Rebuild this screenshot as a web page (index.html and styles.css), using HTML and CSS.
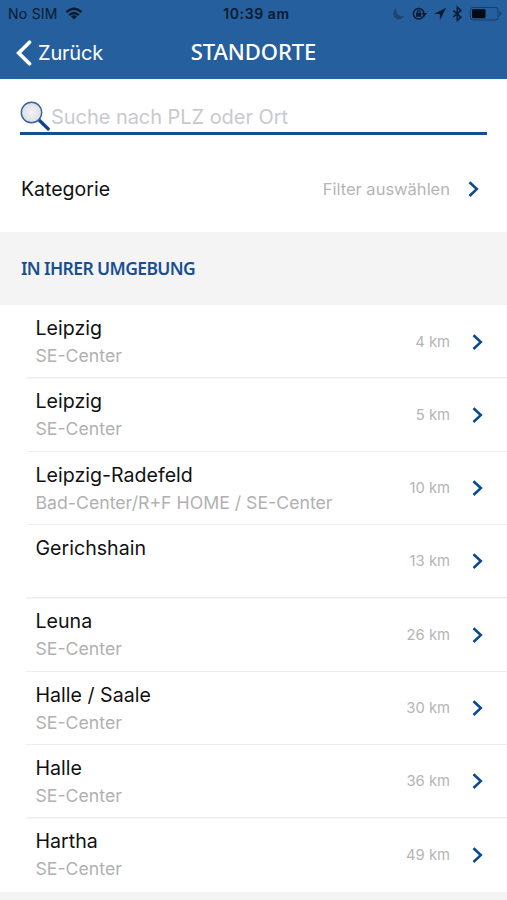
FILE: index.html
```html
<!DOCTYPE html>
<html lang="de">
<head>
<meta charset="utf-8">
<title>Standorte</title>
<link rel="stylesheet" href="styles.css">
</head>
<body>
<svg class="defs" aria-hidden="true"><defs>
<symbol id="chevron" viewBox="0 0 12 18"><path d="M1.500 2.200l7.300 6.900L1.500 16" fill="none" stroke="#0b4a92" stroke-width="2.600"/></symbol>
</defs></svg>
<header class="header">
  <div class="status">
    <div class="carrier"><span>No SIM</span>
      <svg width="18" height="14" viewBox="0 0 18 14"><g fill="none" stroke="#081a30" stroke-width="2.3"><path d="M1.500 5.200Q9-1.700 16.500 5.200M4.200 8.200Q9 3.700 13.800 8.200"/></g><path d="M6 9.500Q9 7.200 12 9.500L9 12.500z" fill="#081a30"/></svg>
    </div>
    <span class="time">10:39 am</span>
    <svg class="indicators" width="115" height="18" viewBox="0 0 115 18">
      <path d="M4 3C-.5 7 1 14 6.500 14.200c2.600.1 4.700-1.200 5.500-3.400C7.500 12.300 3.400 8.500 4 3z" fill="#1b4776"/>
      <circle cx="26.700" cy="8.800" r="5.300" fill="none" stroke="#081a30" stroke-width="1.500"/>
      <path d="M29.500 8h5.500l-2.700 3.500z" fill="#081a30"/>
      <rect x="24.200" y="8" width="5" height="3.800" fill="#081a30"/>
      <path d="M25.200 8.500V7.200a1.500 1.500 0 0 1 3 0V8.500" fill="none" stroke="#081a30" stroke-width="1.200"/>
      <path d="M54.200 2.800L42 9.100H47.900V15z" fill="#081a30"/>
      <path d="M61.300 5.600l7.600 6.600-3.600 3.200V2.200l3.600 3.200-7.600 6.600" fill="none" stroke="#081a30" stroke-width="1.500"/>
      <rect x="78.500" y="2.500" width="27.500" height="12.500" rx="2.500" fill="none" stroke="#183f6c"/>
      <rect x="80" y="4.200" width="13.500" height="9" rx="1" fill="#030a14"/>
      <path d="M107.500 6.500q2 .5 2 2.300t-2 2.300z" fill="#183f6c"/>
    </svg>
  </div>
  <div class="nav">
    <a class="back"><svg width="16" height="26" viewBox="0 0 16 26"><path d="M13.500 2.200L2.700 13l10.800 10.800" fill="none" stroke="#fff" stroke-width="3.700" stroke-linecap="round"/></svg><span>Zurück</span></a>
    <h1 class="title">STANDORTE</h1>
  </div>
</header>
<main>
  <div class="search">
    <svg width="31" height="31" viewBox="0 0 31 31"><defs><radialGradient id="lens"><stop offset="0" stop-color="#f5f4f7"/><stop offset="1" stop-color="#dcdce4"/></radialGradient></defs><path d="M18.500 18.500L28.300 28" stroke="#0d4688" stroke-width="3.200" stroke-linecap="round"/><circle cx="11.500" cy="11.500" r="10.200" fill="url(#lens)" stroke="#3b639b" stroke-width="1.400"/></svg>
    <span class="placeholder">Suche nach PLZ oder Ort</span>
  </div>
  <div class="category"><span class="label">Kategorie</span><span class="filter">Filter auswählen</span><svg class="chevron"><use href="#chevron"/></svg></div>
  <h2 class="section"><span>IN IHRER UMGEBUNG</span></h2>
  <ul class="list">
    <li class="row"><div class="place"><b>Leipzig</b><small>SE-Center</small></div><span class="km">4 km</span><svg class="chevron"><use href="#chevron"/></svg></li>
    <li class="row"><div class="place"><b>Leipzig</b><small>SE-Center</small></div><span class="km">5 km</span><svg class="chevron"><use href="#chevron"/></svg></li>
    <li class="row"><div class="place"><b>Leipzig-Radefeld</b><small>Bad-Center/R+F HOME / SE-Center</small></div><span class="km">10 km</span><svg class="chevron"><use href="#chevron"/></svg></li>
    <li class="row"><div class="place"><b>Gerichshain</b><small></small></div><span class="km">13 km</span><svg class="chevron"><use href="#chevron"/></svg></li>
    <li class="row"><div class="place"><b>Leuna</b><small>SE-Center</small></div><span class="km">26 km</span><svg class="chevron"><use href="#chevron"/></svg></li>
    <li class="row"><div class="place"><b>Halle / Saale</b><small>SE-Center</small></div><span class="km">30 km</span><svg class="chevron"><use href="#chevron"/></svg></li>
    <li class="row"><div class="place"><b>Halle</b><small>SE-Center</small></div><span class="km">36 km</span><svg class="chevron"><use href="#chevron"/></svg></li>
    <li class="row"><div class="place"><b>Hartha</b><small>SE-Center</small></div><span class="km">49 km</span><svg class="chevron"><use href="#chevron"/></svg></li>
  </ul>
</main>
</body>
</html>
```
FILE: styles.css
```css
* { box-sizing: border-box; }
body { margin: 0; height: 900px; overflow: hidden; background: #f4f4f4; font-family: Inter, "Liberation Sans", sans-serif; color: #111; }
svg { flex: none; display: block; }
.defs { position: absolute; width: 0; height: 0; }
.header { height: 79px; background: #255f9d; }
.status { height: 26px; display: grid; grid-template-columns: 1fr auto 1fr; align-items: center; color: #081a30; font-size: 14px; padding: 1px 0 0 8px; }
.carrier { display: flex; align-items: center; gap: 7px; letter-spacing: 0.25px; }
.time { font-weight: 600; letter-spacing: 0.6px; margin-right: 2px; }
.indicators { justify-self: end; }
.nav { height: 53px; display: grid; grid-template-columns: 1fr auto 1fr; align-items: center; padding: 0 16px; color: #fff; }
.back { display: flex; align-items: center; gap: 6px; font-size: 20px; letter-spacing: -0.2px; }
.title { margin: 0 0 3px; font: 500 22px/28px "Noto Sans", sans-serif; letter-spacing: -0.1px; }
main { background: #fff; }
.search { height: 56px; margin: 0 20px; border-bottom: 3px solid #14508f; display: flex; align-items: flex-end; }
.placeholder { font-size: 20px; line-height: 28px; padding-bottom: 1.5px; letter-spacing: -0.05px; color: #c9c9ce; }
.category { height: 97px; padding: 10px 27px 0 21px; display: flex; align-items: center; }
.label { font-size: 19.5px; flex: 1; }
.filter { font-size: 16.5px; color: #b5b5b5; margin-right: 18px; }
.chevron { width: 12px; height: 18px; }
.section { margin: 0; height: 73px; background: #f4f4f4; padding: 0 21px 2px; display: flex; align-items: center; font: 600 17.5px/24px "Noto Sans", sans-serif; letter-spacing: -0.6px; color: #174f92; }
.list { margin: 0; padding: 0.6px 0 0; list-style: none; background: #fff; }
.row { height: 73.3px; margin-left: 26px; padding: 0 23px 1.4px 9.5px; background: linear-gradient(#efefef, #efefef) 0 100% / 100% 1.5px no-repeat; display: flex; align-items: center; }
.row:last-child { background: none; }
.place { flex: 1; display: flex; flex-direction: column; }
.place b { font-weight: 400; font-size: 19.6px; line-height: 28px; }
.place small { font-size: 17.7px; line-height: 27px; height: 27px; color: #b1b1b1; white-space: nowrap; }
.km { font-size: 14.8px; color: #b5b5b5; margin-right: 22px; }
```
